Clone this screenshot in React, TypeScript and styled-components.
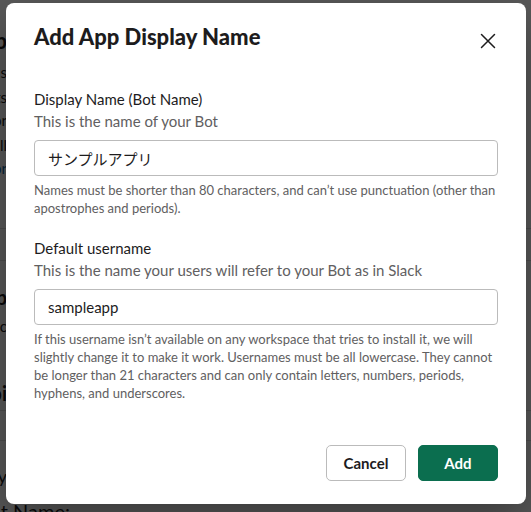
import * as React from 'react';
import styled, { createGlobalStyle } from "styled-components";

const GlobalStyle = createGlobalStyle`
    html, body {
        margin: 0;
        padding: 0;
        background: #ffffff;
    }
    body {
        font-family: Lato, "Noto Sans", "Noto Sans CJK JP", sans-serif;
        color: #1d1c1d;
    }
`;

const Screen = styled.div`
    position: relative;
    width: 531px;
    height: 512px;
    overflow: hidden;
    background: #ffffff;
`;

// page behind the dialog, only its edges show
const Backdrop = styled.div`
    display: flex;
    flex-direction: column;
    width: 100%;
`;

const BgLine = styled.div<{ $h: number, $size?: number, $bold?: boolean, $color?: string, $rule?: boolean }>`
    display: flex;
    align-items: center;
    height: ${p => p.$h}px;
    font-size: ${p => p.$size ?? 15}px;
    font-weight: ${p => p.$bold ? 700 : 400};
    color: ${p => p.$color ?? "#1d1c1d"};
    border-bottom: ${p => p.$rule ? "1px solid #dddddd" : "none"};
    box-sizing: border-box;
`;

const Tail = styled.span<{ $w?: number }>`
    display: flex;
    justify-content: flex-end;
    width: ${p => p.$w ?? 7}px;
    white-space: nowrap;
`;

const Overlay = styled.div`
    position: absolute;
    inset: 0;
    background: rgba(0, 0, 0, 0.65);
    display: flex;
    align-items: flex-start;
    justify-content: flex-start;
    padding: 3px 0 0 6px;
`;

const Modal = styled.div`
    width: 520px;
    height: 501px;
    background: #ffffff;
    border-radius: 8px;
    box-shadow: 0 18px 48px rgba(0, 0, 0, 0.35);
    display: flex;
    flex-direction: column;
    box-sizing: border-box;
`;

const Header = styled.div`
    display: flex;
    align-items: flex-start;
    justify-content: space-between;
    padding: 19px 20px 0 28px;
`;

const Title = styled.h1`
    margin: 0;
    font-size: 22px;
    line-height: 30px;
    font-weight: 900;
    color: #1d1c1d;
`;

const CloseButton = styled.button`
    width: 36px;
    height: 36px;
    margin-top: 1px;
    padding: 0;
    border: none;
    background: transparent;
    border-radius: 4px;
    display: flex;
    align-items: center;
    justify-content: center;
    color: #1d1c1d;
    cursor: pointer;
`;

const Body = styled.div`
    display: flex;
    flex-direction: column;
    padding: 29px 28px 0 28px;
`;

const Field = styled.div<{ $gap?: number }>`
    display: flex;
    flex-direction: column;
    margin-top: ${p => p.$gap ?? 0}px;
`;

const Label = styled.label`
    font-size: 15px;
    line-height: 22px;
    color: #1d1c1d;
`;

const SubLabel = styled.div`
    font-size: 15px;
    line-height: 22px;
    color: #616061;
`;

const Input = styled.input`
    margin-top: 8px;
    height: 36px;
    box-sizing: border-box;
    border: 1px solid #bbbbbb;
    border-radius: 4px;
    padding: 0 12px 0 13px;
    font-family: Lato, "Noto Sans CJK JP", sans-serif;
    font-size: 15px;
    color: #1d1c1d;
    outline: none;
    background: #ffffff;
`;

const Hint = styled.p`
    margin: 5px 0 0 0;
    font-size: 13px;
    line-height: 18px;
    color: #616061;
`;

const Footer = styled.div`
    margin-top: auto;
    display: flex;
    justify-content: flex-end;
    gap: 12px;
    padding: 0 28px 23px 28px;
`;

const Button = styled.button<{ $primary?: boolean }>`
    width: 80px;
    height: 36px;
    border-radius: 5px;
    font-family: Lato, sans-serif;
    font-size: 15px;
    font-weight: 700;
    cursor: pointer;
    border: 1px solid ${p => p.$primary ? "#0b6e4f" : "#bbbbbb"};
    background: ${p => p.$primary ? "#0b6e4f" : "#ffffff"};
    color: ${p => p.$primary ? "#ffffff" : "#1d1c1d"};
`;

const CloseIcon: React.FC = () => (
    <svg width="16" height="16" viewBox="0 0 16 16" fill="none">
        <path d="M1.5 1.5 L14.5 14.5 M14.5 1.5 L1.5 14.5" stroke="#1d1c1d" strokeWidth="1.5" strokeLinecap="round"/>
    </svg>
);

const App: React.FC = () => {
    const [displayName, setDisplayName] = React.useState("サンプルアプリ");
    const [username, setUsername] = React.useState("sampleapp");

    return (
        <Screen>
            <GlobalStyle/>
            <Backdrop>
                <BgLine $h={20}/>
                <BgLine $h={40} $size={22} $bold><Tail>App</Tail></BgLine>
                <BgLine $h={24}><Tail>Tools</Tail></BgLine>
                <BgLine $h={26}><Tail>Bots</Tail></BgLine>
                <BgLine $h={20}><Tail>Learn more or</Tail></BgLine>
                <BgLine $h={30}><Tail>Install</Tail></BgLine>
                <BgLine $h={16} $color="#1264a3"><Tail>Creator</Tail></BgLine>
                <BgLine $h={53} $rule/>
                <BgLine $h={32} $rule/>
                <BgLine $h={19}/>
                <BgLine $h={34} $size={20} $bold><Tail>App</Tail></BgLine>
                <BgLine $h={24}><Tail>Basic</Tail></BgLine>
                <BgLine $h={38}/>
                <BgLine $h={35} $size={20} $bold $rule><Tail>Api</Tail></BgLine>
                <BgLine $h={30} $rule/>
                <BgLine $h={20}/>
                <BgLine $h={30} $size={18}><Tail>Display</Tail></BgLine>
                <BgLine $h={40} $size={20}><Tail $w={70}>Default Name:</Tail></BgLine>
            </Backdrop>
            <Overlay>
                <Modal role="dialog" aria-label="Add App Display Name">
                    <Header>
                        <Title>Add App Display Name</Title>
                        <CloseButton aria-label="Close"><CloseIcon/></CloseButton>
                    </Header>
                    <Body>
                        <Field>
                            <Label>Display Name (Bot Name)</Label>
                            <SubLabel>This is the name of your Bot</SubLabel>
                            <Input value={displayName} onChange={e => setDisplayName(e.target.value)}/>
                            <Hint>Names must be shorter than 80 characters, and can’t use punctuation (other than apostrophes and periods).</Hint>
                        </Field>
                        <Field $gap={20}>
                            <Label>Default username</Label>
                            <SubLabel>This is the name your users will refer to your Bot as in Slack</SubLabel>
                            <Input value={username} onChange={e => setUsername(e.target.value)}/>
                            <Hint>If this username isn’t available on any workspace that tries to install it, we will slightly change it to make it work. Usernames must be all lowercase. They cannot be longer than 21 characters and can only contain letters, numbers, periods, hyphens, and underscores.</Hint>
                        </Field>
                    </Body>
                    <Footer>
                        <Button>Cancel</Button>
                        <Button $primary>Add</Button>
                    </Footer>
                </Modal>
            </Overlay>
        </Screen>
    );
}

export default App;
